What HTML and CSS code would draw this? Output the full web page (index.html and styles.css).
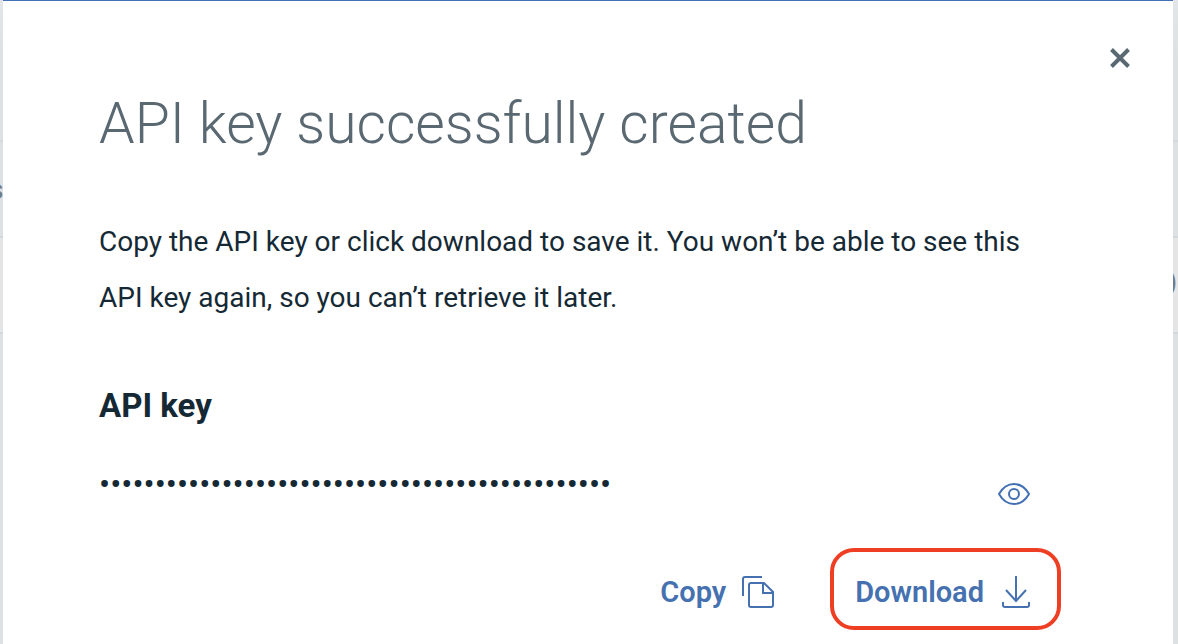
FILE: index.html
```html
<!DOCTYPE html>
<html lang="en">
<head>
<meta charset="utf-8">
<meta name="viewport" content="width=device-width, initial-scale=1">
<title>API key successfully created</title>
<link rel="stylesheet" href="styles.css">
</head>
<body>
<div class="backdrop" aria-hidden="true">
  <div class="row row-head"></div>
  <div class="row"><span class="cell-start">s</span></div>
  <div class="row row-alt"><span class="cell-end">)</span></div>
</div>
<main class="dialog" role="dialog" aria-labelledby="dialog-title">
  <header class="dialog-top">
    <button class="icon-button" type="button" aria-label="Close">
      <svg width="22" height="22" viewBox="0 0 22 22" fill="none" stroke="currentColor" stroke-width="4"><path d="M2.500 2.500l17 17M19.500 2.500l-17 17"/></svg>
    </button>
  </header>
  <div class="content">
    <h1 class="title" id="dialog-title">API key successfully created</h1>
    <p class="message">Copy the API key or click download to save it. You won’t be able to see this API key again, so you can’t retrieve it later.</p>
    <label class="label" for="api-key">API key</label>
    <div class="key-row">
      <input class="key" id="api-key" type="password" readonly value="0000000000000000000000000000000000000000000000">
      <button class="icon-button reveal" type="button" aria-label="Show API key">
        <svg width="32" height="22" viewBox="0 0 32 22" fill="none" stroke="currentColor" stroke-width="2"><path d="M1 11C5 4 10 1 16 1s11 3 15 10c-4 7-9 10-15 10S5 18 1 11z"/><circle cx="16" cy="11" r="5"/></svg>
      </button>
    </div>
  </div>
  <footer class="actions">
    <button class="action" type="button">Copy
      <svg width="32" height="32" viewBox="0 0 32 32" fill="none" stroke="currentColor" stroke-width="2"><path d="M1 20V3q0-2 2-2h17M9 7h13l9 9v13q0 2-2 2H9q-2 0-2-2V9q0-2 2-2zM21 7v10h10"/></svg>
    </button>
    <button class="action action-marked" type="button">Download
      <svg width="28" height="32" viewBox="0 0 28 32" fill="none" stroke="currentColor" stroke-width="2"><path d="M14 0v25M4 14l10 11 10-11M1 26v3q0 2 2 2h22q2 0 2-2v-3"/></svg>
    </button>
  </footer>
</main>
</body>
</html>
```
FILE: styles.css
```css
* { box-sizing: border-box; }
body {
  margin: 0;
  min-height: 100vh;
  display: grid;
  background: linear-gradient(#e2e6e9, #dde1e4 56px);
  font-family: Roboto, "Open Sans", sans-serif;
  color: #152935;
  overflow: hidden;
}
.backdrop, .dialog { grid-area: 1 / 1; min-width: 0; }
.row {
  height: 96px;
  display: flex;
  align-items: center;
  border-bottom: 2px solid #d3d8dc;
  font-size: 28px;
  font-weight: 500;
  color: #737b85;
}
.row-head { height: 142px; }
.row-alt { background: #e5e5e5; }
.cell-start { margin-left: -11px; }
.cell-end { margin-left: auto; margin-right: 1px; padding-bottom: 8px; }
.dialog {
  margin: 0 5px 0 3px;
  border-top: 1px solid #4270b3;
  background: #fff;
  z-index: 1;
}
.dialog-top {
  display: flex;
  justify-content: flex-end;
  padding: 46px 42px 0;
}
button {
  border: 0;
  background: none;
  font: inherit;
  cursor: pointer;
}
svg { display: block; flex: none; }
.icon-button { padding: 0; color: #5a6872; }
.content { padding: 0 141px 0 96px; }
.title {
  margin: 23px 0 0;
  font-size: 57px;
  line-height: 64px;
  font-weight: 300;
  color: #5a6872;
}
.message {
  margin: 58px 0 0;
  font-size: 28px;
  line-height: 56px;
}
.label {
  display: block;
  margin-top: 60px;
  font-size: 33px;
  line-height: 40px;
  font-weight: 700;
}
.key-row {
  display: flex;
  justify-content: space-between;
  margin-top: 42px;
  padding-right: 2px;
}
.key {
  width: 600px;
  height: 32px;
  padding: 0;
  border: 0;
  outline: 0;
  background: none;
  color: inherit;
  font-family: inherit;
  font-size: 33px;
}
.reveal { margin-top: 15px; color: #4270b3; align-self: flex-start; }
.actions {
  display: flex;
  justify-content: flex-end;
  gap: 32px;
  margin-top: 43px;
  padding-right: 112px;
}
.action {
  display: flex;
  align-items: center;
  gap: 16px;
  padding: 28px 24px 22px;
  color: #4671b0;
  font-size: 29px;
  line-height: 32px;
  font-weight: 600;
}
.action-marked {
  gap: 18px;
  padding: 24px 27px 18px 21px;
  border: 4px solid #ee3e23;
  border-radius: 24px;
}
```
